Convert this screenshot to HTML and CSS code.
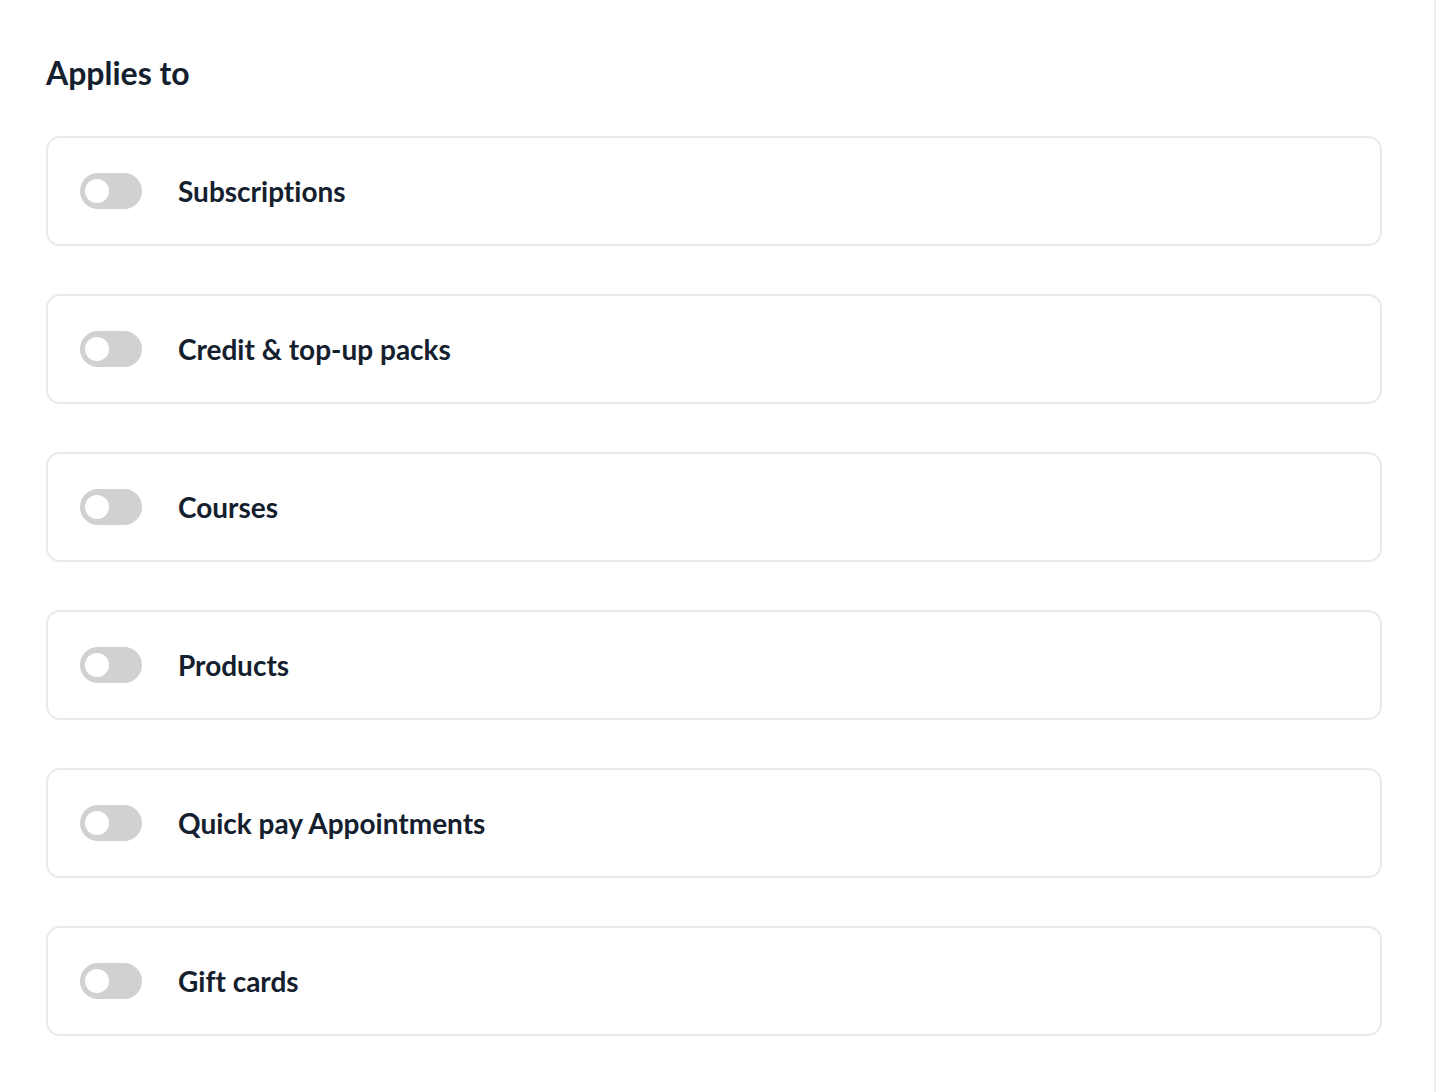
FILE: index.html
```html
<!DOCTYPE html>
<html>
<head>
<meta charset="utf-8">
<link rel="stylesheet" href="styles.css">
</head>
<body>
<div class="page">
  <main class="content">
    <h2 class="title">Applies to</h2>
    <div class="list">
      <div class="card"><span class="toggle"><span class="knob"></span></span><span class="label">Subscriptions</span></div>
      <div class="card"><span class="toggle"><span class="knob"></span></span><span class="label">Credit &amp; top-up packs</span></div>
      <div class="card"><span class="toggle"><span class="knob"></span></span><span class="label">Courses</span></div>
      <div class="card"><span class="toggle"><span class="knob"></span></span><span class="label">Products</span></div>
      <div class="card"><span class="toggle"><span class="knob"></span></span><span class="label">Quick pay Appointments</span></div>
      <div class="card"><span class="toggle"><span class="knob"></span></span><span class="label">Gift cards</span></div>
    </div>
  </main>
  <div class="divider"></div>
</div>
</body>
</html>
```

FILE: styles.css
```css
html, body {
  margin: 0;
  padding: 0;
  background: #fff;
}
body {
  font-family: Lato, "Open Sans", sans-serif;
  color: #14202e;
  font-variant-ligatures: none;
  font-feature-settings: "liga" 0, "clig" 0;
}
.page {
  display: flex;
  width: 1436px;
  height: 1092px;
}
.content {
  flex: 1;
  padding: 52px 52px 0 46px;
}
.divider {
  width: 2px;
  background: #ececf0;
}
.title {
  margin: 0 0 42px 0;
  font-size: 32px;
  line-height: 42px;
  font-weight: 700;
}
.list {
  display: flex;
  flex-direction: column;
  gap: 48px;
}
.card {
  box-sizing: border-box;
  height: 110px;
  border: 2px solid #e9e9ee;
  border-radius: 14px;
  display: flex;
  align-items: center;
  padding-left: 32px;
}
.toggle {
  position: relative;
  width: 62px;
  height: 36px;
  border-radius: 18px;
  background: #d1d1d1;
  flex-shrink: 0;
}
.knob {
  position: absolute;
  left: 5px;
  top: 6px;
  width: 24px;
  height: 24px;
  border-radius: 50%;
  background: #fff;
}
.label {
  margin-left: 36px;
  font-size: 28px;
  font-weight: 700;
}
```
